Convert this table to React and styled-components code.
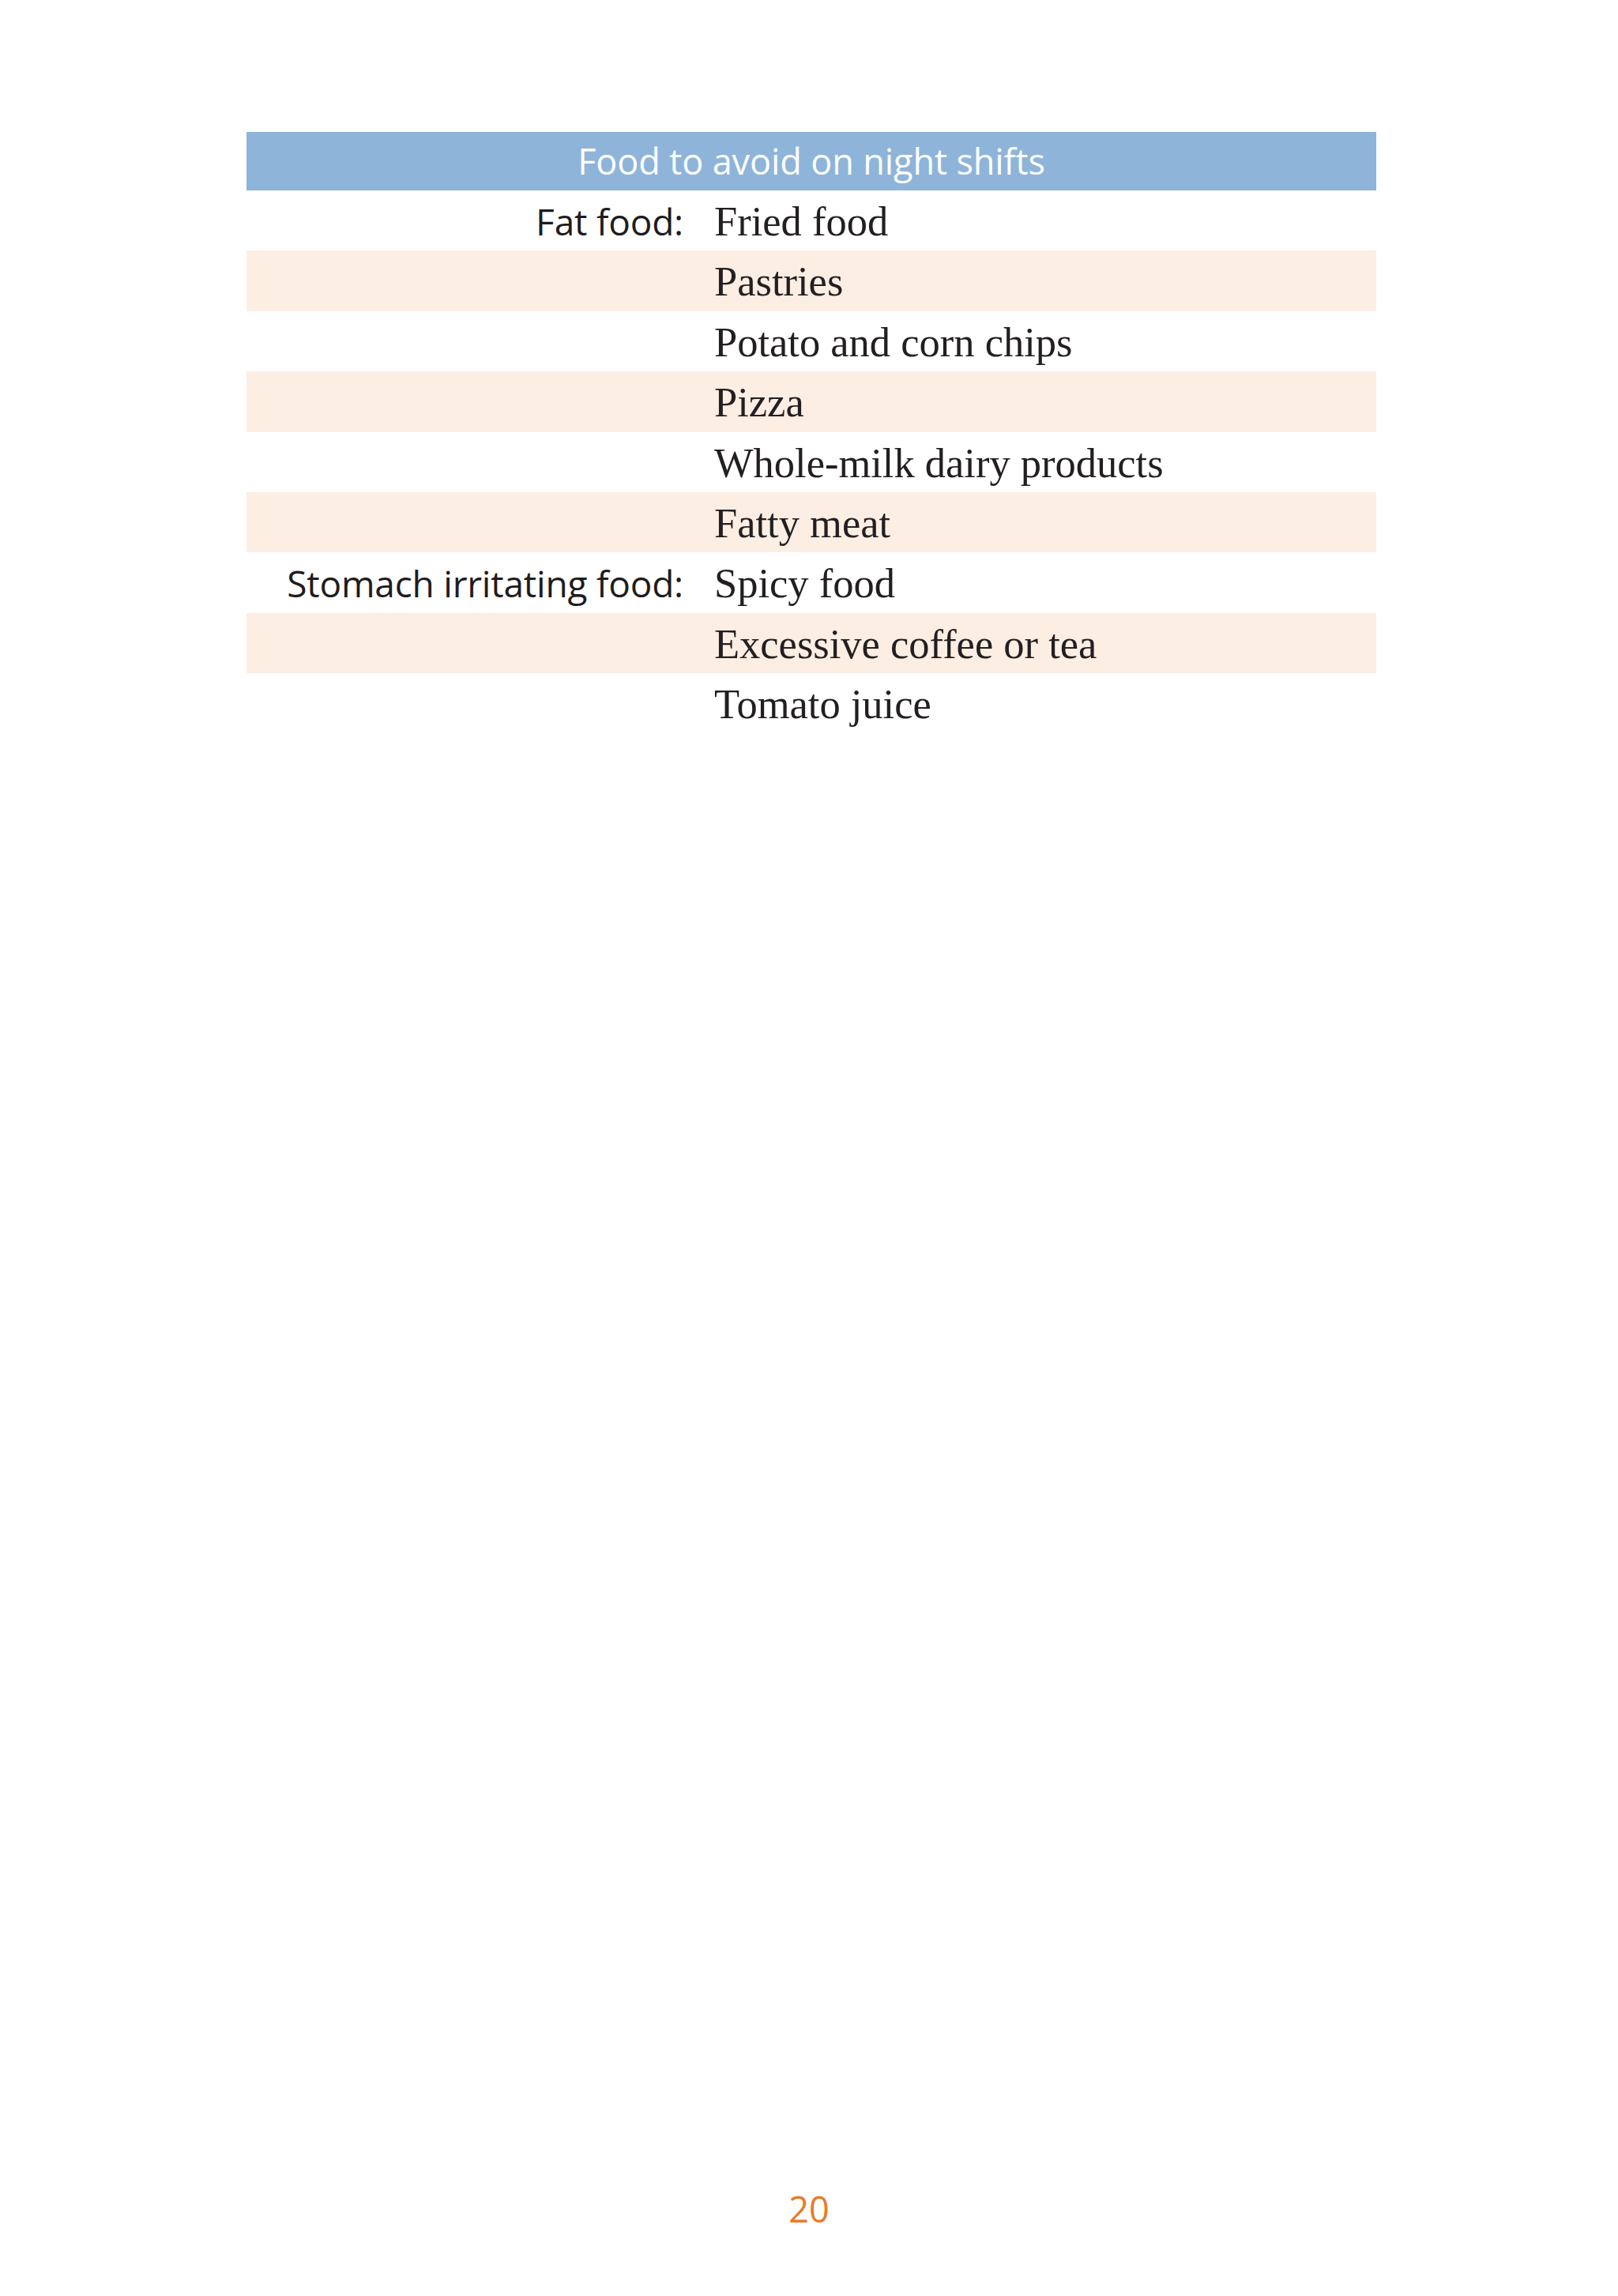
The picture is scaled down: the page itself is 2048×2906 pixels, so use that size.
import React from "react";
import styled, { createGlobalStyle } from "styled-components";

const GlobalStyle = createGlobalStyle`
  html, body {
    margin: 0;
    padding: 0;
    background: #ffffff;
  }
`;

const rows = [
  { label: "Fat food:", item: "Fried food" },
  { label: "", item: "Pastries" },
  { label: "", item: "Potato and corn chips" },
  { label: "", item: "Pizza" },
  { label: "", item: "Whole-milk dairy products" },
  { label: "", item: "Fatty meat" },
  { label: "Stomach irritating food:", item: "Spicy food" },
  { label: "", item: "Excessive coffee or tea" },
  { label: "", item: "Tomato juice" },
];

const App = () => {
  return (
    <Page>
      <GlobalStyle />
      <Table>
        <Caption>Food to avoid on night shifts</Caption>
        {rows.map((row, i) => (
          <Row key={i} shaded={i % 2 === 1}>
            <Label>{row.label}</Label>
            <Item>{row.item}</Item>
          </Row>
        ))}
      </Table>
      <PageNumber>20</PageNumber>
    </Page>
  );
};

const Page = styled.div`
  width: 2048px;
  min-height: 2906px;
  box-sizing: border-box;
  display: flex;
  flex-direction: column;
  padding: 167px 306px 0 312px;
`;

const Table = styled.div`
  width: 1430px;
  display: flex;
  flex-direction: column;
`;

const Caption = styled.div`
  height: 74px;
  line-height: 74px;
  background: #8eb4da;
  color: #ffffff;
  text-align: center;
  font-family: "Open Sans", "Noto Sans", sans-serif;
  font-size: 45px;
  letter-spacing: -0.1px;
`;

const Row = styled.div`
  display: grid;
  grid-template-columns: 553px 1fr;
  column-gap: 39px;
  height: 76.4px;
  line-height: 78px;
  background: ${(p) => (p.shaded ? "#fdeee4" : "transparent")};
`;

const Label = styled.div`
  text-align: right;
  font-family: "Open Sans", "Noto Sans", sans-serif;
  font-size: 46px;
  font-weight: 500;
  color: #1f1c1d;
  letter-spacing: -0.2px;
`;

const Item = styled.div`
  font-family: "Liberation Serif", "Times New Roman", serif;
  font-size: 52.5px;
  color: #231f20;
  white-space: nowrap;
`;

const PageNumber = styled.div`
  margin-top: auto;
  margin-left: -312px;
  margin-right: -306px;
  padding-bottom: 80px;
  text-align: center;
  font-family: "Open Sans", "Noto Sans", sans-serif;
  font-size: 45px;
  color: #e87a2a;
`;

export default App;
